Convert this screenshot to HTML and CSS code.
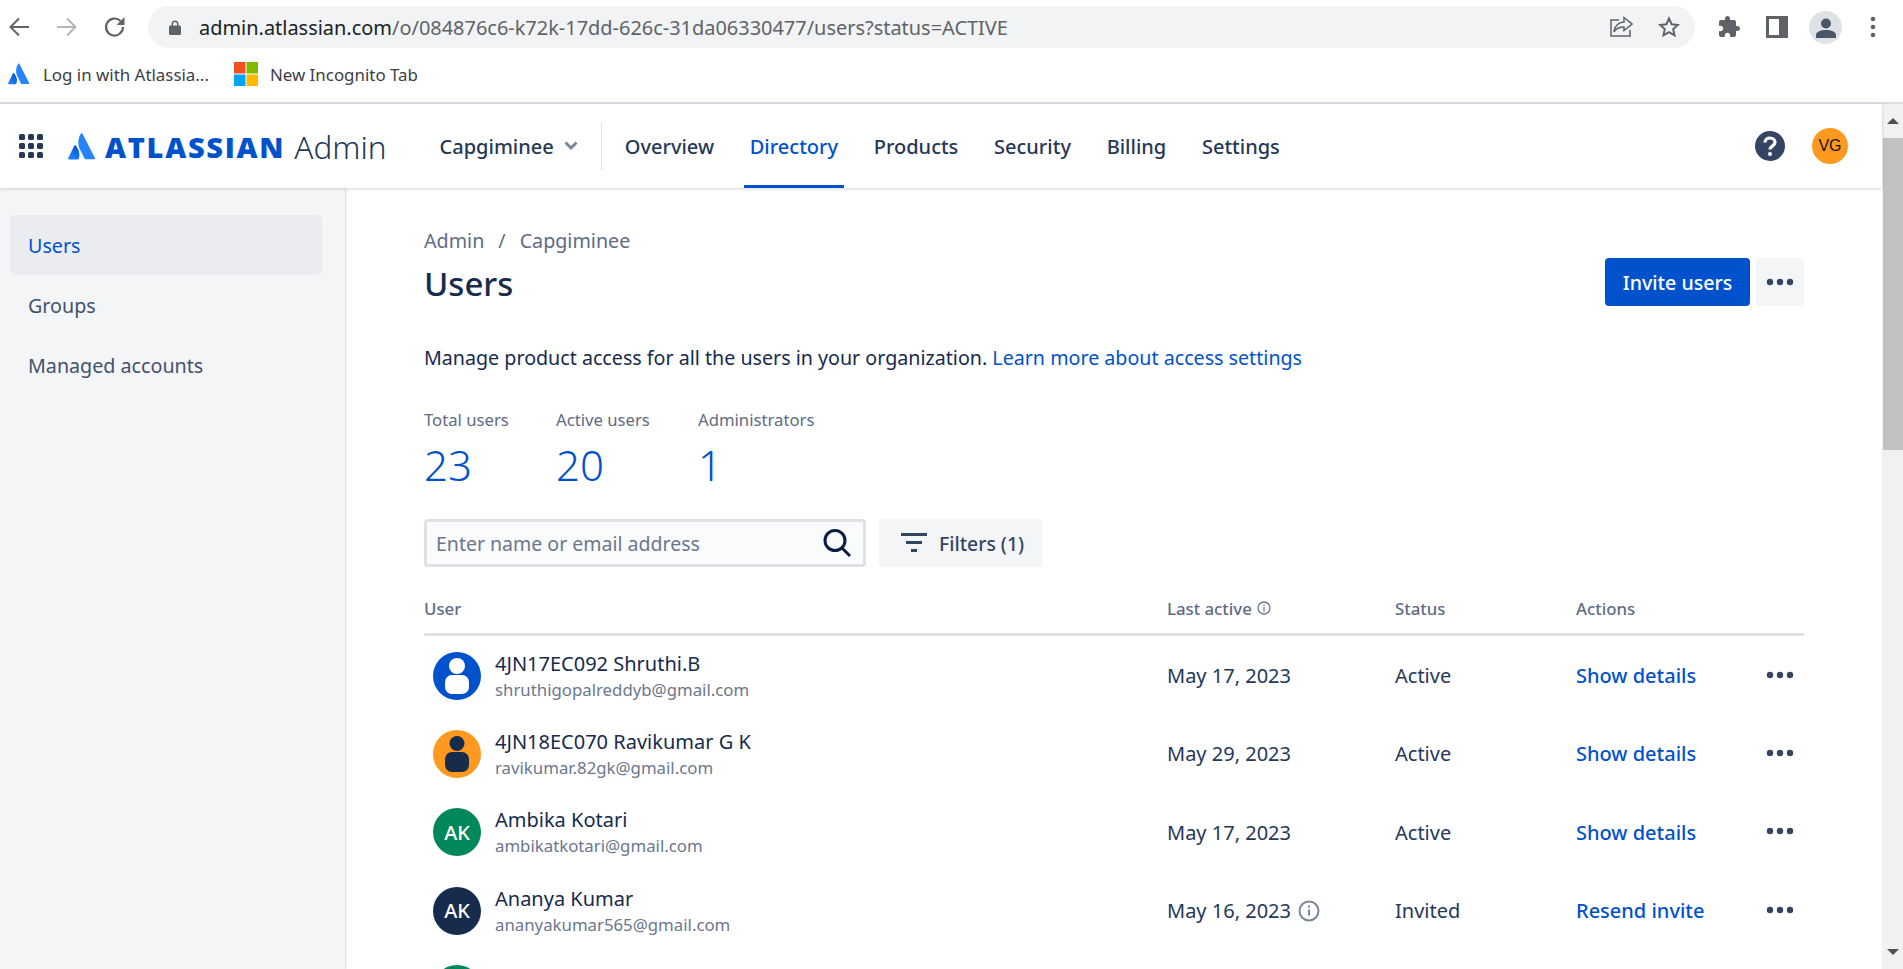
FILE: index.html
```html
<!DOCTYPE html>
<html lang="en">
<head>
<meta charset="utf-8">
<title>Users - Atlassian Admin</title>
<link rel="stylesheet" href="styles.css">
</head>
<body>
<svg class="defs" width="0" height="0" aria-hidden="true">
  <defs>
    <linearGradient id="atl" x1="0.9" y1="0.1" x2="0.3" y2="1">
      <stop offset="0" stop-color="#0052CC"/><stop offset="1" stop-color="#2684FF"/>
    </linearGradient>
    <symbol id="mark" viewBox="0 0 29 28">
      <path fill="url(#atl)" d="M7.9 12.9c-.4-.5-1-.4-1.3.1L.1 26.2c-.3.6.1 1.3.8 1.3h9.2c.3 0 .6-.2.8-.5 1.9-3.9.8-10-3-14.1z"/>
      <path fill="#2684FF" d="M13.4.6c-3.5 5.6-3.3 11.800-1 16.500l4.800 9.600c.1.300.5.500.8.500h9.100c.7 0 1.100-.7.800-1.300L14.900.6c-.3-.6-1.100-.6-1.500 0z"/>
    </symbol>
    <symbol id="dots" viewBox="0 0 28 8">
      <circle cx="4" cy="4" r="3.200"/><circle cx="14" cy="4" r="3.200"/><circle cx="24" cy="4" r="3.200"/>
    </symbol>
  </defs>
</svg>

<div class="toolbar">
  <span class="tb-icon"><svg width="24" height="24" viewBox="0 0 24 24" fill="none" stroke="#5f6368" stroke-width="2"><path d="M22 12H4M12 3.500 3.500 12l8.500 8.500"/></svg></span>
  <span class="tb-icon"><svg width="24" height="24" viewBox="0 0 24 24" fill="none" stroke="#b4b6b9" stroke-width="2"><path d="M2 12h18M12 3.500l8.500 8.500-8.500 8.500"/></svg></span>
  <span class="tb-icon"><svg width="24" height="24" viewBox="0 0 24 24" fill="none" stroke="#5f6368" stroke-width="2.200"><path d="M20 12a8.500 8.500 0 1 1-2.500-6"/><path fill="#5f6368" stroke="none" d="M21.500 2v8h-8z"/></svg></span>
  <div class="omnibox">
    <svg class="lock" width="12" height="15" viewBox="0 0 12 15"><path fill="#5f6368" d="M1.500 5.500H2.500V4a3.500 3.500 0 0 1 7 0v1.500h1A1.500 1.500 0 0 1 12 7v6.500a1.500 1.500 0 0 1-1.500 1.500h-9A1.500 1.500 0 0 1 0 13.500V7a1.500 1.500 0 0 1 1.500-1.500zM4 5.500h4V4a2 2 0 0 0-4 0z"/></svg>
    <span class="url"><span class="url-host">admin.atlassian.com</span>/o/084876c6-k72k-17dd-626c-31da06330477/users?status=ACTIVE</span>
    <span class="tb-icon"><svg width="24" height="24" viewBox="0 0 24 24" fill="none" stroke="#5f6368" stroke-width="1.500"><path d="M10 5H2v16h19v-6"/><path d="M15 2.500 23 9l-8 6.500V12c-4.500 0-8 1.500-10 5 .5-5.500 4-9.500 10-10z"/></svg></span>
    <span class="tb-icon"><svg width="24" height="24" viewBox="0 0 24 24" fill="none" stroke="#5f6368" stroke-width="2"><path d="m12 3.500 2.600 5.700 6.200.7-4.600 4.200 1.300 6.200-5.500-3.200-5.500 3.200 1.300-6.200-4.600-4.200 6.200-.7z"/></svg></span>
  </div>
  <div class="tb-right">
    <span class="tb-icon"><svg width="24" height="24" viewBox="0 0 24 24" fill="#5f6368"><path d="M20.500 11H19V7c0-1.100-.9-2-2-2h-4V3.500C13 2.120 11.880 1 10.500 1S8 2.120 8 3.500V5H4c-1.100 0-1.990.9-1.990 2v3.800H3.500c1.490 0 2.700 1.210 2.700 2.700s-1.210 2.700-2.700 2.700H2V20c0 1.100.9 2 2 2h3.800v-1.500c0-1.490 1.210-2.700 2.700-2.700 1.490 0 2.700 1.210 2.700 2.700V22H17c1.100 0 2-.9 2-2v-4h1.500c1.380 0 2.500-1.120 2.500-2.500S21.880 11 20.500 11z"/></svg></span>
    <span class="tb-icon"><svg width="22" height="22" viewBox="0 0 22 22"><path fill="#5f6368" d="M0 0h22v22H0z"/><path fill="#fff" d="M3 3h10v16H3z"/></svg></span>
    <span class="tb-icon profile"><svg width="20" height="20" viewBox="0 0 20 20" fill="#4a5568"><circle cx="10" cy="5.500" r="5"/><path d="M0 20v-3c0-3.500 5-5 10-5s10 1.500 10 5v3z"/></svg></span>
    <span class="tb-icon"><svg width="6" height="22" viewBox="0 0 6 22" fill="#5f6368"><circle cx="3" cy="3" r="2.300"/><circle cx="3" cy="11" r="2.300"/><circle cx="3" cy="19" r="2.300"/></svg></span>
  </div>
</div>

<div class="bookmarks">
  <a class="bookmark"><svg class="bm-mark" width="22" height="22"><use href="#mark"/></svg>Log in with Atlassia...</a>
  <a class="bookmark"><svg class="bm-ms" width="24" height="24" viewBox="0 0 24 24"><path fill="#F25022" d="M0 0h11.500v11.500H0z"/><path fill="#7FBA00" d="M12.500 0H24v11.500H12.500z"/><path fill="#00A4EF" d="M0 12.500h11.500V24H0z"/><path fill="#FFB900" d="M12.500 12.500H24V24H12.500z"/></svg>New Incognito Tab</a>
</div>

<div class="viewport">
  <div class="page">
    <header class="header">
      <svg class="app-grid" width="24" height="24" viewBox="0 0 24 24" fill="#253858">
        <rect x="0" y="0" width="6" height="6" rx="1.500"/><rect x="9" y="0" width="6" height="6" rx="1.500"/><rect x="18" y="0" width="6" height="6" rx="1.500"/>
        <rect x="0" y="9" width="6" height="6" rx="1.500"/><rect x="9" y="9" width="6" height="6" rx="1.500"/><rect x="18" y="9" width="6" height="6" rx="1.500"/>
        <rect x="0" y="18" width="6" height="6" rx="1.500"/><rect x="9" y="18" width="6" height="6" rx="1.500"/><rect x="18" y="18" width="6" height="6" rx="1.500"/>
      </svg>
      <svg class="logo-mark" width="28" height="27"><use href="#mark"/></svg>
      <span class="wordmark">ATLASSIAN</span>
      <span class="admin">Admin</span>
      <span class="org">Capgiminee</span>
      <svg class="org-chev" width="14" height="10" viewBox="0 0 14 10" fill="none" stroke="#7a869a" stroke-width="3"><path d="m1.500 1.500 5.500 5.500 5.500-5.500"/></svg>
      <span class="nav-divider"></span>
      <nav class="nav">
        <a class="nav-item">Overview</a>
        <a class="nav-item active">Directory</a>
        <a class="nav-item">Products</a>
        <a class="nav-item">Security</a>
        <a class="nav-item">Billing</a>
        <a class="nav-item">Settings</a>
      </nav>
      <svg class="help" width="30" height="30" viewBox="0 0 30 30"><circle cx="15" cy="15" r="15" fill="#344563"/><path fill="none" stroke="#fff" stroke-width="3.200" d="M10 11.500c0-3 2.300-4.500 5-4.500s5 1.700 5 4.300c0 3.700-5 3.400-5 7.200"/><circle cx="15" cy="23" r="2" fill="#fff"/></svg>
      <span class="me">VG</span>
    </header>

    <div class="body">
      <aside class="sidebar">
        <a class="side-item current">Users</a>
        <a class="side-item">Groups</a>
        <a class="side-item">Managed accounts</a>
      </aside>

      <main class="main">
        <div class="crumbs"><span>Admin</span><span class="slash">/</span><span>Capgiminee</span></div>
        <div class="title-row">
          <h1 class="title">Users</h1>
          <button class="primary">Invite users</button>
          <button class="more"><svg width="28" height="8"><use href="#dots"/></svg></button>
        </div>
        <p class="intro">Manage product access for all the users in your organization. <a class="link">Learn more about access settings</a></p>
        <div class="stats">
          <div class="stat s1"><div class="stat-label">Total users</div><div class="stat-num">23</div></div>
          <div class="stat s2"><div class="stat-label">Active users</div><div class="stat-num">20</div></div>
          <div class="stat"><div class="stat-label">Administrators</div><div class="stat-num">1</div></div>
        </div>
        <div class="filters">
          <div class="search">
            <span class="placeholder">Enter name or email address</span>
            <svg width="30" height="30" viewBox="0 0 30 30" fill="none" stroke="#091E42" stroke-width="3"><circle cx="13" cy="12.500" r="10"/><path d="m20 20 8 8"/></svg>
          </div>
          <button class="filter-btn"><svg width="26" height="20" viewBox="0 0 26 20" fill="#344563"><rect width="26" height="3"/><rect x="5" y="8" width="16" height="3"/><rect x="10" y="16" width="6" height="3"/></svg>Filters (1)</button>
        </div>

        <div class="thead row-grid">
          <span>User</span>
          <span class="th-last">Last active <svg width="14" height="14" viewBox="0 0 14 14" fill="none" stroke="#6b778c" stroke-width="1.300"><circle cx="7" cy="7" r="6"/><path d="M7 6v4.500M7 3.500v1.300"/></svg></span>
          <span>Status</span>
          <span>Actions</span>
        </div>

        <div class="trow row-grid">
          <div class="user">
            <span class="avatar av-blue"><svg width="48" height="48" viewBox="0 0 48 48" fill="#fff"><circle cx="24" cy="14" r="8"/><rect x="12" y="23" width="24" height="19" rx="7"/></svg></span>
            <div><div class="name">4JN17EC092 Shruthi.B</div><div class="email">shruthigopalreddyb@gmail.com</div></div>
          </div>
          <span>May 17, 2023</span><span>Active</span>
          <div class="actions"><a class="action">Show details</a><svg class="row-more" width="28" height="8"><use href="#dots"/></svg></div>
        </div>
        <div class="trow row-grid">
          <div class="user">
            <span class="avatar av-orange"><svg width="48" height="48" viewBox="0 0 48 48" fill="#172B4D"><circle cx="24" cy="13.500" r="7.500"/><rect x="12" y="22" width="24" height="20" rx="7"/></svg></span>
            <div><div class="name">4JN18EC070 Ravikumar G K</div><div class="email">ravikumar.82gk@gmail.com</div></div>
          </div>
          <span>May 29, 2023</span><span>Active</span>
          <div class="actions"><a class="action">Show details</a><svg class="row-more" width="28" height="8"><use href="#dots"/></svg></div>
        </div>
        <div class="trow row-grid">
          <div class="user">
            <span class="avatar av-green">AK</span>
            <div><div class="name">Ambika Kotari</div><div class="email">ambikatkotari@gmail.com</div></div>
          </div>
          <span>May 17, 2023</span><span>Active</span>
          <div class="actions"><a class="action">Show details</a><svg class="row-more" width="28" height="8"><use href="#dots"/></svg></div>
        </div>
        <div class="trow row-grid">
          <div class="user">
            <span class="avatar av-navy">AK</span>
            <div><div class="name">Ananya Kumar</div><div class="email">ananyakumar565@gmail.com</div></div>
          </div>
          <span class="date-info">May 16, 2023 <svg width="22" height="22" viewBox="0 0 22 22" fill="none" stroke="#7a869a" stroke-width="2"><circle cx="11" cy="11" r="9.500"/><path d="M11 9.500v6M11 5.500v2"/></svg></span><span>Invited</span>
          <div class="actions"><a class="action">Resend invite</a><svg class="row-more" width="28" height="8"><use href="#dots"/></svg></div>
        </div>
        <div class="trow row-grid">
          <div class="user">
            <span class="avatar av-green"></span>
          </div>
        </div>
      </main>
    </div>
  </div>

  <div class="scrollbar">
    <span class="sb-btn"><span class="arrow-up"></span></span>
    <span class="sb-thumb"></span>
    <span class="sb-space"></span>
    <span class="sb-btn"><span class="arrow-down"></span></span>
  </div>
</div>
</body>
</html>
```

FILE: styles.css
```css
* { box-sizing: border-box; }
html, body { margin: 0; height: 100%; }
body {
  display: flex;
  flex-direction: column;
  height: 969px;
  overflow: hidden;
  background: #fff;
  color: #172B4D;
  font-family: "Noto Sans", "Open Sans", "Liberation Sans", sans-serif;
}
.defs { position: absolute; }

/* browser chrome */
.toolbar { height: 52px; flex: none; display: flex; align-items: flex-start; padding: 6px 0 0 1px; gap: 12px; }
.tb-icon { width: 36px; height: 42px; flex: none; display: flex; align-items: center; justify-content: center; }
.omnibox { width: 1547px; height: 42px; margin-left: 3px; flex: none; display: flex; align-items: center; padding: 0 8px 0 21px; gap: 12px; border-radius: 21px; background: #f1f3f4; }
.lock { flex: none; margin-right: 6px; }
.url { flex: 1; font-size: 19.950px; color: #5f6368; white-space: nowrap; }
.url-host { color: #202124; }
.tb-right { display: flex; gap: 12px; margin-left: 4px; }
.profile { width: 33px; height: 33px; margin: 5px 1px 0 2px; border-radius: 50%; background: #dee1e6; }
.bookmarks { height: 52px; flex: none; display: flex; align-items: center; padding: 0 0 6px 8px; gap: 25px; border-bottom: 2px solid #dadce0; font-size: 16.900px; color: #3c4043; }
.bookmark { display: flex; align-items: center; gap: 13px; }
.bm-ms { margin-right: -1px; }
.bm-mark { flex: none; }

/* page */
.viewport { flex: 1; min-height: 0; display: flex; }
.page { flex: 1; min-width: 0; display: flex; flex-direction: column; }
.header { position: relative; z-index: 2; height: 84px; flex: none; display: flex; align-items: center; padding: 0 34px 0 19px; background: #fff; box-shadow: 0 1px 3px rgba(9, 30, 66, .18); }
.app-grid { flex: none; margin-right: 25px; }
.logo-mark { flex: none; margin-right: 9px; }
.wordmark { font-family: "Open Sans", "Noto Sans", sans-serif; font-weight: 800; font-size: 29px; letter-spacing: 1.700px; color: #0052CC; }
.admin { margin-left: 9px; font-size: 31.500px; font-weight: 300; color: #253858; }
.org { margin-left: 53px; padding-top: 1px; font-size: 20px; font-weight: 500; color: #253858; }
.org-chev { margin-left: 10px; flex: none; }
.nav-divider { width: 1px; height: 48px; margin: 0 17px 0 23px; background: #dfe1e6; }
.nav { display: flex; align-self: stretch; flex: 1; }
.nav-item { display: flex; align-items: center; padding: 1px 6px 0; margin-right: 23.700px; border-bottom: 3px solid transparent; border-top: 3px solid transparent; font-size: 20px; font-weight: 500; color: #253858; }
.nav-item.active { color: #0052CC; border-bottom-color: #0052CC; }
.help { flex: none; margin-right: 27px; }
.me { width: 36px; height: 36px; flex: none; display: flex; align-items: center; justify-content: center; border-radius: 50%; background: #FF991F; color: #111; font-family: "Liberation Sans", sans-serif; font-size: 16px; }

.body { flex: 1; min-height: 0; display: flex; }
.sidebar { width: 345px; flex: none; display: flex; flex-direction: column; padding: 27px 23px 0 10px; background: #F4F5F7; box-shadow: 1px 0 2px rgba(9, 30, 66, .2); }
.side-item { height: 60px; flex: none; display: flex; align-items: center; padding: 1px 0 0 18px; border-radius: 5px; font-size: 19.700px; color: #42526E; }
.side-item.current { background: #EBECF0; color: #0052CC; }
.main { flex: 1; min-width: 0; overflow: hidden; padding: 38px 78px 0 79px; }

.crumbs { display: flex; gap: 14px; height: 28px; align-items: center; font-size: 19.700px; color: #5E6C84; }
.title-row { display: flex; align-items: center; gap: 6px; height: 48px; margin-top: 4px; }
.title { flex: 1; margin: 0; padding-top: 2px; font-size: 33px; font-weight: 500; color: #172B4D; }
.primary { width: 145px; height: 48px; border: 0; border-radius: 4px; background: #0052CC; color: #fff; font: 500 19.600px "Noto Sans", sans-serif; }
.more { width: 48px; height: 48px; padding: 0; border: 0; border-radius: 4px; background: #F4F5F7; fill: #344563; display: flex; align-items: center; justify-content: center; }
.intro { margin: 38px 0 0; height: 28px; line-height: 28px; font-size: 19.670px; color: #172B4D; }
.link { color: #0052CC; }
.stats { display: flex; margin-top: 36px; }
.stat.s1 { width: 132px; }
.stat.s2 { width: 142px; }
.stat-label { height: 24px; line-height: 24px; font-size: 16.700px; color: #5E6C84; }
.stat-num { height: 52px; margin-top: 7px; line-height: 52px; font-size: 42px; font-weight: 300; color: #0052CC; }
.filters { display: flex; gap: 13px; margin-top: 28px; }
.search { width: 442px; height: 48px; display: flex; align-items: center; justify-content: space-between; padding: 0 11px 0 9px; border: 3px solid #DFE1E6; border-radius: 4px; background: #FAFBFC; }
.placeholder { font-size: 19.500px; color: #6B778C; }
.filter-btn { width: 163px; height: 48px; display: flex; align-items: center; justify-content: center; gap: 12px; padding: 0 0 0 4px; border: 0; border-radius: 4px; background: #F4F5F7; color: #344563; font: 500 19.400px "Noto Sans", sans-serif; }
.row-grid { display: grid; grid-template-columns: 743px 228px 181px 228px; align-items: center; }
.thead { height: 45px; margin-top: 24px; padding-bottom: 8px; border-bottom: 3px solid #DFE1E6; font-size: 16.800px; font-weight: 500; color: #5E6C84; }
.th-last { display: flex; align-items: center; gap: 5px; }
.trow { height: 78.300px; padding-top: 1px; font-size: 20px; color: #253858; }
.user { display: flex; align-items: center; gap: 14px; padding-left: 9px; }
.avatar { width: 48px; height: 48px; flex: none; display: flex; align-items: center; justify-content: center; border-radius: 50%; color: #fff; font-size: 20px; font-weight: 500; }
.av-blue { background: #0052CC; }
.av-orange { background: #FF991F; }
.av-green { background: #00875A; }
.av-navy { background: #172B4D; }
.name { height: 28px; line-height: 28px; font-size: 20px; color: #172B4D; }
.email { height: 24px; line-height: 24px; font-size: 16.800px; color: #6B778C; }
.date-info { display: flex; align-items: center; gap: 7px; }
.actions { display: flex; align-items: center; justify-content: space-between; padding-right: 10px; }
.action { font-weight: 500; color: #0052CC; }
.row-more { fill: #344563; margin-top: -2px; }

.scrollbar { width: 21px; flex: none; display: flex; flex-direction: column; background: #f1f1f1; }
.sb-btn { height: 34px; flex: none; display: flex; align-items: center; justify-content: center; }
.sb-thumb { height: 312px; flex: none; margin-left: 1px; background: #c1c1c1; }
.sb-space { flex: 1; }
.arrow-up { border: 6px solid transparent; border-top: 0; border-bottom: 6px solid #505050; }
.arrow-down { border: 6px solid transparent; border-bottom: 0; border-top: 6px solid #505050; }
```
